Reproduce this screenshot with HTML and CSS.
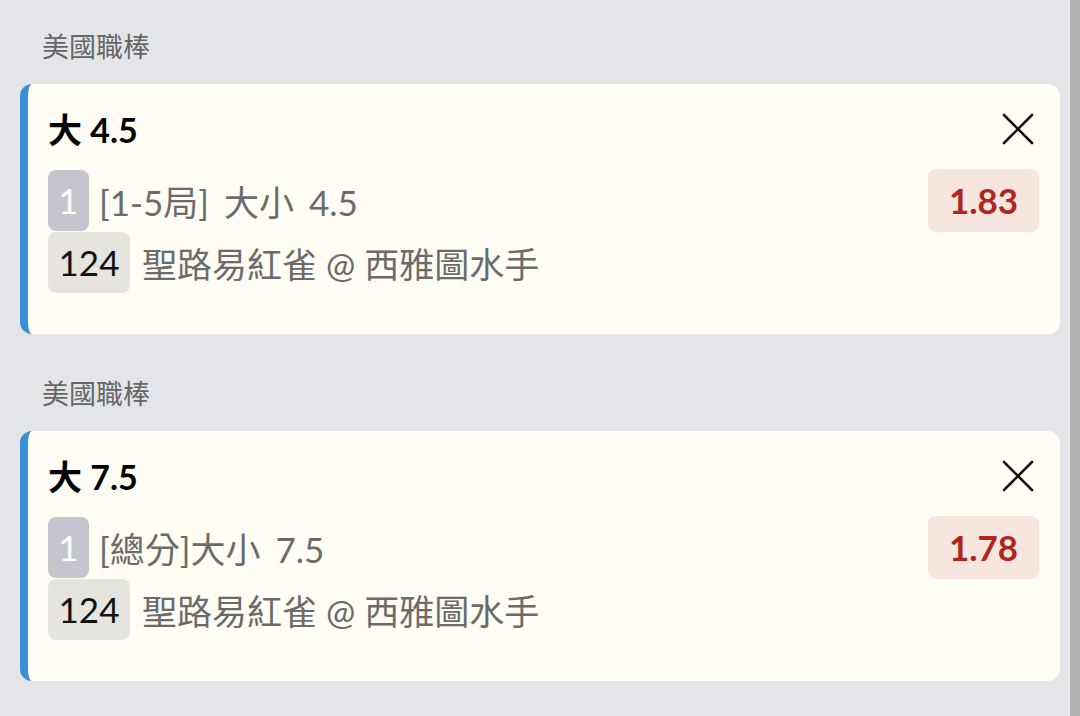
FILE: index.html
```html
<!DOCTYPE html>
<html lang="zh-Hant">
<head>
    <meta charset="UTF-8">
    <title>投注單</title>
    <link rel="stylesheet" href="styles.css">
</head>
<body>
    <div class="lista">
        <div class="seccion">
            <div class="liga">美國職棒</div>
            <div class="tarjeta">
                <div class="cabecera">
                    <div class="titulo">大 4.5</div>
                    <svg class="cerrar" viewBox="0 0 32 32" width="32" height="32">
                        <path d="M2 2 L30 30 M30 2 L2 30" stroke="#111" stroke-width="2.6" stroke-linecap="round" fill="none"/>
                    </svg>
                </div>
                <div class="fila">
                    <span class="num num-gris">1</span>
                    <span class="texto mercado">[1-5局] 大小 4.5</span>
                    <span class="cuota">1.83</span>
                </div>
                <div class="fila">
                    <span class="num num-beige">124</span>
                    <span class="texto partido">聖路易紅雀 @ 西雅圖水手</span>
                </div>
            </div>
        </div>

        <div class="seccion">
            <div class="liga">美國職棒</div>
            <div class="tarjeta">
                <div class="cabecera">
                    <div class="titulo">大 7.5</div>
                    <svg class="cerrar" viewBox="0 0 32 32" width="32" height="32">
                        <path d="M2 2 L30 30 M30 2 L2 30" stroke="#111" stroke-width="2.6" stroke-linecap="round" fill="none"/>
                    </svg>
                </div>
                <div class="fila">
                    <span class="num num-gris">1</span>
                    <span class="texto mercado">[總分]大小 7.5</span>
                    <span class="cuota">1.78</span>
                </div>
                <div class="fila">
                    <span class="num num-beige">124</span>
                    <span class="texto partido">聖路易紅雀 @ 西雅圖水手</span>
                </div>
            </div>
        </div>
    </div>
    <div class="barra"></div>
</body>
</html>
```

FILE: styles.css
```css
body {
    margin: 0;
    background-color: #e4e5e8;
    font-family: Lato, "Noto Sans CJK TC", sans-serif;
    display: flex;
    height: 716px;
    overflow: hidden;
}

.lista {
    flex: 1;
    padding: 29px 10px 0 20px;
}

.barra {
    width: 10px;
    background-color: #b1b1b1;
}

.seccion {
    margin-bottom: 42px;
}

.liga {
    font-size: 27px;
    line-height: 36px;
    color: #666;
    padding-left: 22px;
    margin-bottom: 19px;
}

.tarjeta {
    background-color: #fffdf4;
    border-left: 8px solid #3a8fd6;
    border-radius: 12px;
    padding: 24px 21px 40px 20px;
}

.cabecera {
    display: flex;
    justify-content: space-between;
    align-items: center;
    height: 40px;
    margin-bottom: 22px;
}

.titulo {
    font-size: 34px;
    font-weight: bold;
    color: #000;
}

.cerrar {
    margin-right: 5px;
    margin-top: 2px;
}

.fila {
    display: flex;
    align-items: center;
    height: 61px;
    margin-bottom: 1px;
}

.num {
    height: 61px;
    line-height: 61px;
    border-radius: 8px;
    font-size: 35px;
    text-align: center;
}

.num-gris {
    width: 41px;
    background-color: #c5c5cd;
    color: #fff;
}

.num-beige {
    width: 82px;
    background-color: #e6e4de;
    color: #111;
}

.texto {
    font-size: 35px;
    color: #6b6b6b;
    margin-left: 10px;
    flex: 1;
}

.mercado {
    word-spacing: 6px;
}

.partido {
    margin-left: 12px;
}

.cuota {
    width: 111px;
    height: 63px;
    line-height: 63px;
    text-align: center;
    background-color: #f7e6df;
    color: #b1261c;
    font-size: 35px;
    font-weight: bold;
    border-radius: 8px;
}
```
